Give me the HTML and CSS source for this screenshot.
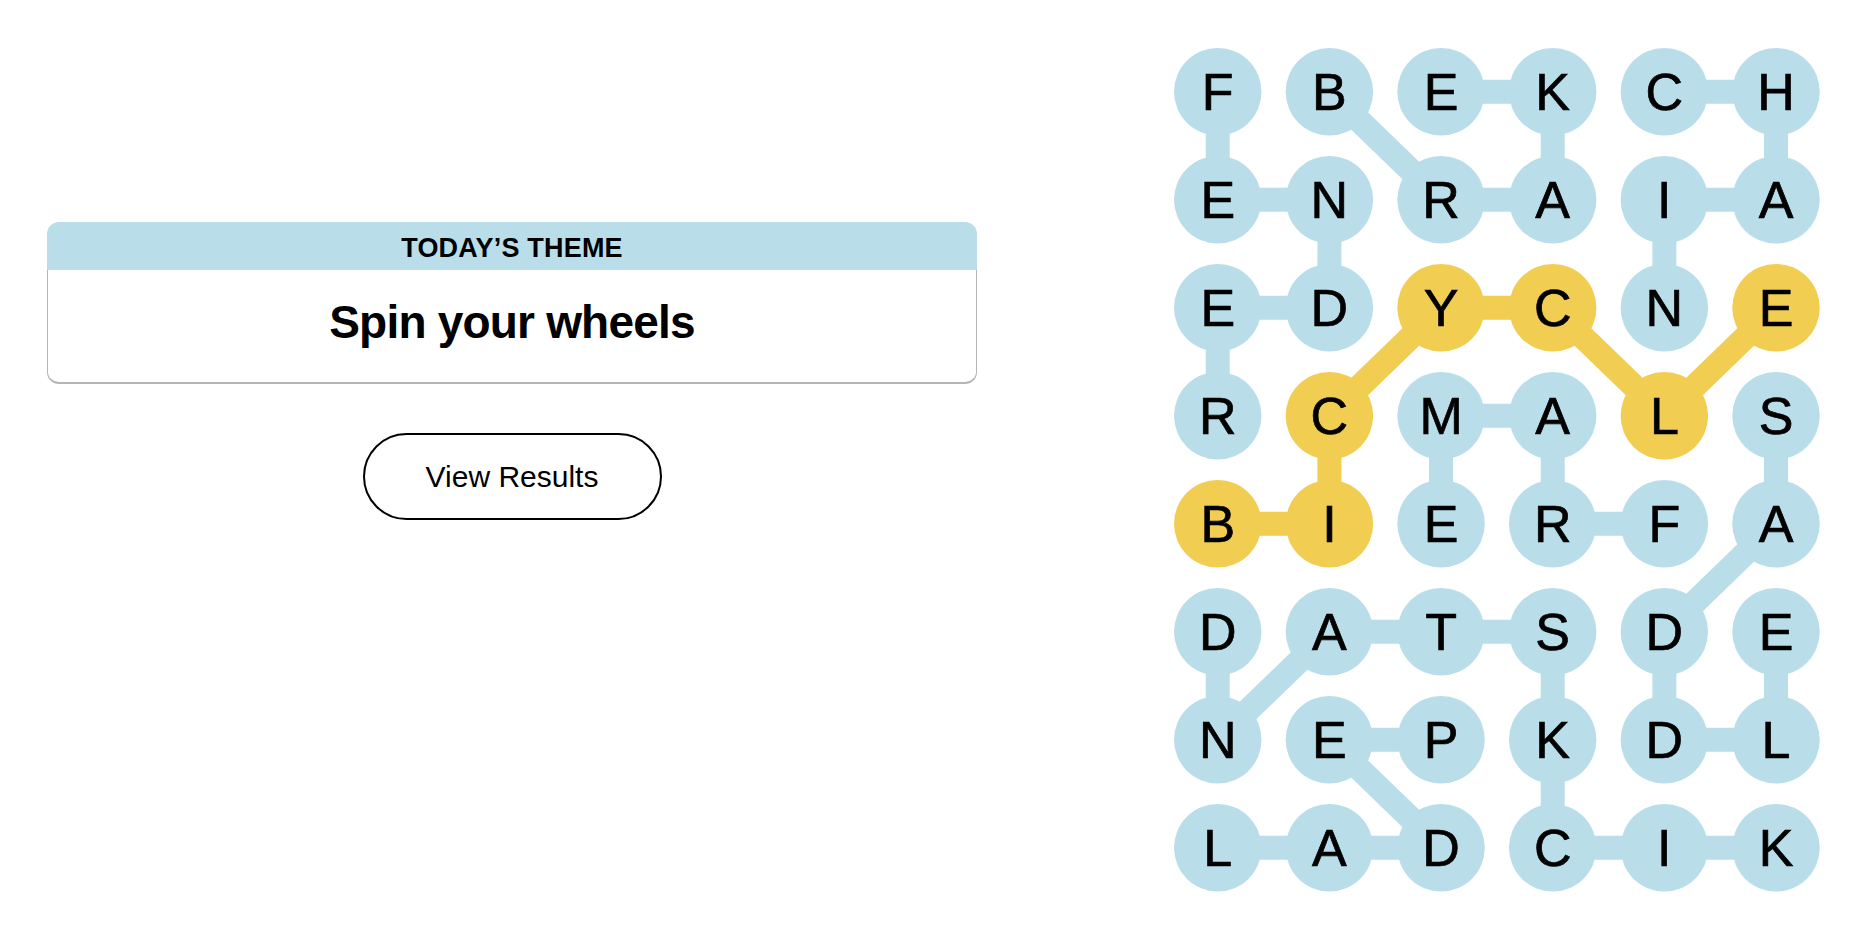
FILE: index.html
```html
<!DOCTYPE html>
<html lang="en">

<head>
    <meta charset="UTF-8">
    <meta name="viewport" content="width=device-width, initial-scale=1.0">
    <title>Strands</title>
    <link rel="stylesheet" href="styles.css">
</head>

<body>
    <div class="page">
        <!-- Tema hari ini -->
        <div class="sidebar">
            <div class="theme-card">
                <div class="theme-header">TODAY’S THEME</div>
                <div class="theme-body">Spin your wheels</div>
            </div>
            <button class="results-button">View Results</button>
        </div>

        <!-- Papan huruf -->
        <svg class="board" width="646" height="844" viewBox="0 0 646 844">
            <g class="paths">
                <polyline class="path-found" points="43.75,43.75 43.75,151.75 155.4,151.75 155.4,259.75 43.75,259.75 43.75,367.75" />
                <polyline class="path-found" points="155.4,43.75 267.05,151.75 378.7,151.75 378.7,43.75 267.05,43.75" />
                <polyline class="path-found" points="490.35,43.75 602,43.75 602,151.75 490.35,151.75 490.35,259.75" />
                <polyline class="path-found" points="490.35,475.75 378.7,475.75 378.7,367.75 267.05,367.75 267.05,475.75" />
                <polyline class="path-found" points="602,367.75 602,475.75 490.35,583.75 490.35,691.75 602,691.75 602,583.75" />
                <polyline class="path-found" points="602,799.75 490.35,799.75 378.7,799.75 378.7,691.75 378.7,583.75 267.05,583.75 155.4,583.75 43.75,691.75 43.75,583.75" />
                <polyline class="path-found" points="267.05,691.75 155.4,691.75 267.05,799.75 155.4,799.75 43.75,799.75" />
                <polyline class="path-spangram" points="43.75,475.75 155.4,475.75 155.4,367.75 267.05,259.75 378.7,259.75 490.35,367.75 602,259.75" />
            </g>

            <!-- baris 1 -->
            <circle class="cell" cx="43.75" cy="43.75" r="43.75" /><text class="letter" x="43.75" y="62.25">F</text>
            <circle class="cell" cx="155.4" cy="43.75" r="43.75" /><text class="letter" x="155.4" y="62.25">B</text>
            <circle class="cell" cx="267.05" cy="43.75" r="43.75" /><text class="letter" x="267.05" y="62.25">E</text>
            <circle class="cell" cx="378.7" cy="43.75" r="43.75" /><text class="letter" x="378.7" y="62.25">K</text>
            <circle class="cell" cx="490.35" cy="43.75" r="43.75" /><text class="letter" x="490.35" y="62.25">C</text>
            <circle class="cell" cx="602" cy="43.75" r="43.75" /><text class="letter" x="602" y="62.25">H</text>

            <!-- baris 2 -->
            <circle class="cell" cx="43.75" cy="151.75" r="43.75" /><text class="letter" x="43.75" y="170.25">E</text>
            <circle class="cell" cx="155.4" cy="151.75" r="43.75" /><text class="letter" x="155.4" y="170.25">N</text>
            <circle class="cell" cx="267.05" cy="151.75" r="43.75" /><text class="letter" x="267.05" y="170.25">R</text>
            <circle class="cell" cx="378.7" cy="151.75" r="43.75" /><text class="letter" x="378.7" y="170.25">A</text>
            <circle class="cell" cx="490.35" cy="151.75" r="43.75" /><text class="letter" x="490.35" y="170.25">I</text>
            <circle class="cell" cx="602" cy="151.75" r="43.75" /><text class="letter" x="602" y="170.25">A</text>

            <!-- baris 3 -->
            <circle class="cell" cx="43.75" cy="259.75" r="43.75" /><text class="letter" x="43.75" y="278.25">E</text>
            <circle class="cell" cx="155.4" cy="259.75" r="43.75" /><text class="letter" x="155.4" y="278.25">D</text>
            <circle class="cell spangram" cx="267.05" cy="259.75" r="43.75" /><text class="letter" x="267.05" y="278.25">Y</text>
            <circle class="cell spangram" cx="378.7" cy="259.75" r="43.75" /><text class="letter" x="378.7" y="278.25">C</text>
            <circle class="cell" cx="490.35" cy="259.75" r="43.75" /><text class="letter" x="490.35" y="278.25">N</text>
            <circle class="cell spangram" cx="602" cy="259.75" r="43.75" /><text class="letter" x="602" y="278.25">E</text>

            <!-- baris 4 -->
            <circle class="cell" cx="43.75" cy="367.75" r="43.75" /><text class="letter" x="43.75" y="386.25">R</text>
            <circle class="cell spangram" cx="155.4" cy="367.75" r="43.75" /><text class="letter" x="155.4" y="386.25">C</text>
            <circle class="cell" cx="267.05" cy="367.75" r="43.75" /><text class="letter" x="267.05" y="386.25">M</text>
            <circle class="cell" cx="378.7" cy="367.75" r="43.75" /><text class="letter" x="378.7" y="386.25">A</text>
            <circle class="cell spangram" cx="490.35" cy="367.75" r="43.75" /><text class="letter" x="490.35" y="386.25">L</text>
            <circle class="cell" cx="602" cy="367.75" r="43.75" /><text class="letter" x="602" y="386.25">S</text>

            <!-- baris 5 -->
            <circle class="cell spangram" cx="43.75" cy="475.75" r="43.75" /><text class="letter" x="43.75" y="494.25">B</text>
            <circle class="cell spangram" cx="155.4" cy="475.75" r="43.75" /><text class="letter" x="155.4" y="494.25">I</text>
            <circle class="cell" cx="267.05" cy="475.75" r="43.75" /><text class="letter" x="267.05" y="494.25">E</text>
            <circle class="cell" cx="378.7" cy="475.75" r="43.75" /><text class="letter" x="378.7" y="494.25">R</text>
            <circle class="cell" cx="490.35" cy="475.75" r="43.75" /><text class="letter" x="490.35" y="494.25">F</text>
            <circle class="cell" cx="602" cy="475.75" r="43.75" /><text class="letter" x="602" y="494.25">A</text>

            <!-- baris 6 -->
            <circle class="cell" cx="43.75" cy="583.75" r="43.75" /><text class="letter" x="43.75" y="602.25">D</text>
            <circle class="cell" cx="155.4" cy="583.75" r="43.75" /><text class="letter" x="155.4" y="602.25">A</text>
            <circle class="cell" cx="267.05" cy="583.75" r="43.75" /><text class="letter" x="267.05" y="602.25">T</text>
            <circle class="cell" cx="378.7" cy="583.75" r="43.75" /><text class="letter" x="378.7" y="602.25">S</text>
            <circle class="cell" cx="490.35" cy="583.75" r="43.75" /><text class="letter" x="490.35" y="602.25">D</text>
            <circle class="cell" cx="602" cy="583.75" r="43.75" /><text class="letter" x="602" y="602.25">E</text>

            <!-- baris 7 -->
            <circle class="cell" cx="43.75" cy="691.75" r="43.75" /><text class="letter" x="43.75" y="710.25">N</text>
            <circle class="cell" cx="155.4" cy="691.75" r="43.75" /><text class="letter" x="155.4" y="710.25">E</text>
            <circle class="cell" cx="267.05" cy="691.75" r="43.75" /><text class="letter" x="267.05" y="710.25">P</text>
            <circle class="cell" cx="378.7" cy="691.75" r="43.75" /><text class="letter" x="378.7" y="710.25">K</text>
            <circle class="cell" cx="490.35" cy="691.75" r="43.75" /><text class="letter" x="490.35" y="710.25">D</text>
            <circle class="cell" cx="602" cy="691.75" r="43.75" /><text class="letter" x="602" y="710.25">L</text>

            <!-- baris 8 -->
            <circle class="cell" cx="43.75" cy="799.75" r="43.75" /><text class="letter" x="43.75" y="818.25">L</text>
            <circle class="cell" cx="155.4" cy="799.75" r="43.75" /><text class="letter" x="155.4" y="818.25">A</text>
            <circle class="cell" cx="267.05" cy="799.75" r="43.75" /><text class="letter" x="267.05" y="818.25">D</text>
            <circle class="cell" cx="378.7" cy="799.75" r="43.75" /><text class="letter" x="378.7" y="818.25">C</text>
            <circle class="cell" cx="490.35" cy="799.75" r="43.75" /><text class="letter" x="490.35" y="818.25">I</text>
            <circle class="cell" cx="602" cy="799.75" r="43.75" /><text class="letter" x="602" y="818.25">K</text>
        </svg>
    </div>
</body>

</html>
```

FILE: styles.css
```css
/* Styling Umum */

body {
    font-family: 'Liberation Sans', Arial, sans-serif;
    margin: 0;
    padding: 0;
    background-color: #fff;
    color: #000;
}

.page {
    display: flex;
    align-items: flex-start;
    gap: 197px;
    padding: 48px 0 0 47px;
}

/* Kolom kiri */

.sidebar {
    width: 930px;
    margin-top: 174px;
    display: flex;
    flex-direction: column;
    align-items: center;
}

.theme-card {
    width: 100%;
}

.theme-header {
    height: 45px;
    padding-top: 3px;
    line-height: 46px;
    background-color: #b9dee9;
    border-radius: 12px 12px 0 0;
    text-align: center;
    font-size: 27px;
    font-weight: 700;
    letter-spacing: 0.2px;
}

.theme-body {
    padding: 26px 0 33px;
    border: 1px solid #b5b5b5;
    border-top: none;
    border-bottom-width: 2px;
    border-radius: 0 0 12px 12px;
    text-align: center;
    font-size: 46px;
    line-height: 53px;
    font-weight: 700;
    letter-spacing: -0.8px;
}

.results-button {
    margin-top: 49px;
    width: 299px;
    height: 87px;
    background-color: #fff;
    border: 2px solid #000;
    border-radius: 44px;
    font-family: 'Liberation Sans', Arial, sans-serif;
    font-size: 30px;
    color: #000;
    cursor: pointer;
}

/* Papan huruf */

.board {
    display: block;
}

.path-found,
.path-spangram {
    fill: none;
    stroke-width: 24;
    stroke-linejoin: round;
}

.path-found {
    stroke: #b9dee9;
}

.path-spangram {
    stroke: #f1cd52;
}

.cell {
    fill: #b9dee9;
}

.cell.spangram {
    fill: #f1cd52;
}

.letter {
    font-family: 'Liberation Sans', Arial, sans-serif;
    font-size: 52px;
    text-anchor: middle;
    fill: #000;
    stroke: #000;
    stroke-width: 0.7;
}
```
